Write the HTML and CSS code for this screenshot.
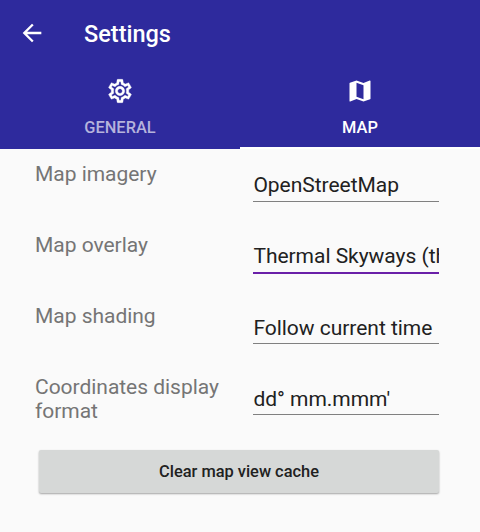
FILE: index.html
```html
<!DOCTYPE html>
<html lang="en">
<head>
<meta charset="utf-8">
<title>Settings</title>
<link rel="stylesheet" href="styles.css">
</head>
<body>
<header class="header">
  <div class="toolbar">
    <svg class="back" viewBox="0 0 24 24"><path d="M20 11H7.83l5.59-5.59L12 4l-8 8 8 8 1.41-1.41L7.83 13H20v-2z"/></svg>
    <h1 class="title">Settings</h1>
  </div>
  <nav class="tabs">
    <div class="tab">
      <svg class="tab-icon gear" viewBox="0 0 24 24"><path d="M19.43 12.98c.04-.32.07-.64.07-.98s-.03-.66-.07-.98l2.11-1.65c.19-.15.24-.42.12-.64l-2-3.46c-.09-.16-.26-.25-.44-.25-.06 0-.12.01-.17.03l-2.49 1c-.52-.4-1.08-.73-1.69-.98l-.38-2.65C14.46 2.18 14.25 2 14 2h-4c-.25 0-.46.18-.49.42l-.38 2.65c-.61.25-1.17.59-1.69.98l-2.49-1c-.06-.02-.12-.03-.18-.03-.17 0-.34.09-.43.25l-2 3.46c-.13.22-.07.49.12.64l2.11 1.65c-.04.32-.07.65-.07.98s.03.66.07.98l-2.11 1.65c-.19.15-.24.42-.12.64l2 3.46c.09.16.26.25.44.25.06 0 .12-.01.17-.03l2.49-1c.52.4 1.08.73 1.69.98l.38 2.65c.03.24.24.42.49.42h4c.25 0 .46-.18.49-.42l.38-2.65c.61-.25 1.17-.59 1.69-.98l2.49 1c.06.02.12.03.18.03.17 0 .34-.09.43-.25l2-3.46c.12-.22.07-.49-.12-.64l-2.11-1.65zm-1.98-1.71c.04.31.05.52.05.73s-.02.43-.05.73l-.14 1.13.89.7 1.08.84-.7 1.21-1.27-.51-1.04-.42-.9.68c-.43.32-.84.56-1.25.73l-1.06.43-.16 1.13-.2 1.35h-1.4l-.19-1.35-.16-1.13-1.06-.43c-.43-.18-.83-.41-1.23-.71l-.91-.7-1.06.43-1.27.51-.7-1.21 1.08-.84.89-.7-.14-1.13c-.03-.31-.05-.54-.05-.74s.02-.43.05-.73l.14-1.13-.89-.7-1.08-.84.7-1.21 1.27.51 1.04.42.9-.68c.43-.32.84-.56 1.25-.73l1.06-.43.16-1.13.2-1.35h1.39l.19 1.35.16 1.13 1.06.43c.43.18.83.41 1.23.71l.91.7 1.06-.43 1.27-.51.7 1.21-1.07.85-.89.7.14 1.13zM12 8c-2.21 0-4 1.79-4 4s1.79 4 4 4 4-1.79 4-4-1.79-4-4-4zm0 6c-1.1 0-2-.9-2-2s.9-2 2-2 2 .9 2 2-.9 2-2 2z"/></svg>
      <span>GENERAL</span>
    </div>
    <div class="tab active">
      <svg class="tab-icon" viewBox="0 0 24 24"><path d="M20.5 3l-.16.03L15 5.1 9 3 3.36 4.9c-.21.07-.36.25-.36.48V20.5c0 .28.22.5.5.5l.16-.03L9 18.9l6 2.1 5.64-1.9c.21-.07.36-.25.36-.48V3.5c0-.28-.22-.5-.5-.5zM15 19l-6-2.11V5l6 2.11V19z"/></svg>
      <span>MAP</span>
    </div>
  </nav>
</header>
<main class="form">
  <div class="row"><div class="label">Map imagery</div><div class="field">OpenStreetMap</div></div>
  <div class="row"><div class="label">Map overlay</div><div class="field focused">Thermal Skyways (th</div></div>
  <div class="row"><div class="label">Map shading</div><div class="field low">Follow current time</div></div>
  <div class="row"><div class="label">Coordinates display format</div><div class="field low">dd° mm.mmm'</div></div>
  <button class="clear">Clear map view cache</button>
</main>
</body>
</html>
```
FILE: styles.css
```css
* { box-sizing: border-box; }
body { margin: 0; width: 480px; height: 532px; overflow: hidden; background: #fafafa; font-family: Roboto, sans-serif; }
.header { height: 149px; background: #2e2a9d; color: #fff; }
.toolbar { height: 65px; padding: 0 18px; display: flex; align-items: center; }
.back { width: 28px; height: 28px; fill: #fff; }
.title { margin: 3px 0 0 38px; font-size: 23.5px; line-height: 28px; font-weight: 500; }
.tabs { height: 84px; display: flex; }
.tab { flex: 1; display: flex; flex-direction: column; align-items: center; padding-top: 12px; font-size: 16.4px; line-height: 20px; font-weight: 500; color: #b5b3dc; }
.tab-icon { width: 28px; height: 28px; margin-bottom: 13px; fill: #fff; }
.gear { stroke: #fff; stroke-width: .3; }
.active { color: #fff; border-bottom: 2px solid #fff; }
.form { padding: 13px 41px 0 35px; }
.row { height: 71px; display: grid; grid-template-columns: 186px 186px; column-gap: 32px; align-items: start; }
.label { font-size: 21px; line-height: 24px; letter-spacing: -0.03px; color: #757575; }
.field { height: 40px; padding: 10px 0 0 .4px; font-size: 21px; line-height: 26px; letter-spacing: -0.03px; color: #212121; white-space: nowrap; overflow: hidden; border-bottom: 1px solid #808080; }
.low { padding-top: 11px; }
.focused { height: 41px; border-bottom: 2px solid #6a1fa8; }
.clear { display: block; width: 400px; height: 43px; margin: 4px 0 0 4px; padding: 0; border: 0; border-radius: 2px; background: #d6d8d7; color: #212121; font: 500 16.4px Roboto, sans-serif; box-shadow: 0 1px 2px rgba(0,0,0,.35); }
```
